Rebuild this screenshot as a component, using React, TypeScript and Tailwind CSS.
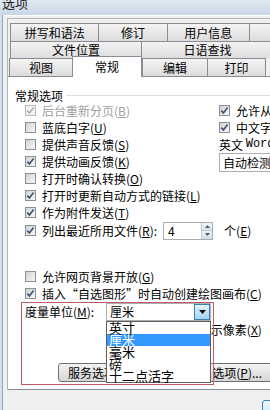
import React from 'react';

interface BoxProps {
  checked?: boolean;
  disabled?: boolean;
}

function Box({ checked, disabled }: BoxProps) {
  return (
    <span
      className={`flex h-[11px] w-[11px] shrink-0 items-center justify-center border ${
        disabled
          ? 'border-[#b9b9b9] bg-[#f2f2f2]'
          : 'border-[#8e8f8f] bg-linear-to-br from-[#cfd3d8] to-[#f8f8f8]'
      }`}
    >
      {checked && (
        <svg width="9" height="9" viewBox="0 0 9 9">
          <path
            d="M1.3 4.6 L3.4 6.9 L7.6 1.6"
            fill="none"
            stroke={disabled ? '#a9b1bc' : '#3f5170'}
            strokeWidth="1.6"
          />
        </svg>
      )}
    </span>
  );
}

interface CheckRowProps extends BoxProps {
  label: string;
  k: string;
  tail?: string;
}

function CheckRow({ label, k, tail = '', checked, disabled }: CheckRowProps) {
  return (
    <div className="flex h-[17px] items-center whitespace-nowrap">
      <Box checked={checked} disabled={disabled} />
      <span className={`ml-[6px] leading-[17px] ${disabled ? 'text-[#a0a0a0]' : ''}`}>
        {label}(<span className="underline">{k}</span>){tail}
      </span>
    </div>
  );
}

interface TabProps {
  label: string;
  w: string;
  last?: boolean;
}

function Tab({ label, w, last }: TabProps) {
  return (
    <div
      className={`flex h-full items-center justify-center border-l border-t border-[#898c95] bg-linear-to-b from-[#f4f4f4] to-[#dcdcdc] leading-[16px] ${w} ${
        last ? 'border-r' : ''
      }`}
    >
      {label}
    </div>
  );
}

const UNITS = ['英寸', '厘米', '毫米', '磅', '十二点活字'];

export default function App() {
  return (
    <div className="relative h-[410px] w-[270px] overflow-hidden bg-[#f0f0f0] font-['Noto_Sans_CJK_SC',sans-serif] text-[12px] text-black">
      {/* 标题栏 */}
      <div className="h-[15px] overflow-hidden bg-linear-to-b from-[#e1e9f2] to-[#c9d7e6] pl-[2px]">
        <div className="-mt-[6px] text-[13px] leading-[17px] text-[#1b1b1b]">选项</div>
      </div>

      <div className="flex h-[395px]">
        <div className="w-[3px] shrink-0 border-r border-[#93a6bd] bg-[#d3dfec]" />
        <div className="flex-1 border-t border-white pl-[4px] pt-[2px]">
          <div className="w-[320px] border-l border-t border-[#b4b4b4] pt-[4px]">
            {/* 选项卡 */}
            <div className="ml-[2px] flex h-[18px]">
              <Tab label="拼写和语法" w="w-[91px]" />
              <Tab label="修订" w="w-[70px]" />
              <Tab label="用户信息" w="w-[85px]" />
              <Tab label="兼容性" w="w-[80px]" last />
            </div>
            <div className="ml-[2px] flex h-[17px]">
              <Tab label="文件位置" w="w-[131px]" />
              <Tab label="日语查找" w="w-[133px]" last />
            </div>
            <div className="ml-[1px] flex h-[18px] items-start">
              <Tab label="视图" w="w-[63px]" />
              <div className="relative z-10 -mt-[2px] flex h-[21px] w-[70px] items-center justify-center border-x border-t border-[#898c95] bg-white pb-[1px] leading-[16px]">
                常规
              </div>
              <Tab label="编辑" w="w-[65px]" />
              <Tab label="打印" w="w-[59px]" last />
            </div>

            {/* 内容面板 */}
            <div className="h-[314px] border-y border-[#898c95] bg-white pl-[7px] pt-[12px]">
              <div className="flex h-[13px] items-center">
                <span className="leading-[13px]">常规选项</span>
                <span className="ml-[3px] h-px flex-1 bg-[#d9dde2]" />
              </div>

              <div className="pl-[10px]">
                <div className="flex">
                  <div className="w-[194px] shrink-0">
                    <CheckRow label="后台重新分页" k="B" checked disabled />
                    <CheckRow label="蓝底白字" k="U" />
                    <CheckRow label="提供声音反馈" k="S" />
                    <CheckRow label="提供动画反馈" k="K" checked />
                    <CheckRow label="打开时确认转换" k="O" />
                  </div>
                  <div className="whitespace-nowrap">
                    <CheckRow label="允许从左向右排版" k="A" checked />
                    <CheckRow label="中文字体也应用于西文" k="F" checked />
                    <div className="flex h-[17px] items-center leading-[17px]">
                      英文&nbsp;<span className="font-['Liberation_Mono',monospace]">Word 6.0/95</span>&nbsp;文档(<span className="underline">N</span>):
                    </div>
                    <div className="flex h-[19px] w-[200px] items-center border border-[#abadb3] bg-white pl-[3px] leading-[17px]">
                      自动检测是否包含亚洲语言文字
                    </div>
                  </div>
                </div>

                <CheckRow label="打开时更新自动方式的链接" k="L" checked />
                <CheckRow label="作为附件发送" k="T" checked />

                <div className="flex h-[19px] items-center whitespace-nowrap">
                  <Box checked />
                  <span className="ml-[6px] leading-[17px]">
                    列出最近所用文件(<span className="underline">R</span>):
                  </span>
                  <div className="ml-[6px] flex h-[18px] w-[50px] border border-[#abadb3] bg-white">
                    <span className="flex-1 pl-[4px] leading-[16px]">4</span>
                    <div className="flex w-[11px] flex-col border-l border-[#c3c8d0]">
                      <span className="flex flex-1 items-center justify-center border-b border-[#c3c8d0] bg-linear-to-b from-[#f4f7fb] to-[#d9e2ec]">
                        <svg width="5" height="3" viewBox="0 0 5 3">
                          <path d="M0 3 L2.5 0 L5 3 Z" fill="#4b5a6e" />
                        </svg>
                      </span>
                      <span className="flex flex-1 items-center justify-center bg-linear-to-b from-[#eef2f7] to-[#d3dce7]">
                        <svg width="5" height="3" viewBox="0 0 5 3">
                          <path d="M0 0 L2.5 3 L5 0 Z" fill="#4b5a6e" />
                        </svg>
                      </span>
                    </div>
                  </div>
                  <span className="ml-[11px] leading-[17px]">
                    个(<span className="underline">E</span>)
                  </span>
                </div>

                <div className="mt-[28px]">
                  <CheckRow label="允许网页背景开放" k="G" />
                  <CheckRow label="插入“自选图形”时自动创建绘图画布" k="C" checked />
                </div>

                {/* 度量单位 */}
                <div className="flex h-[19px] items-center whitespace-nowrap">
                  <span className="w-[81px] shrink-0 leading-[17px]">
                    度量单位(<span className="underline">M</span>):
                  </span>
                  <div className="relative flex h-[18px] w-[105px] items-center border border-[#abadb3] bg-white pl-[3px]">
                    <span className="flex-1 leading-[16px]">厘米</span>
                    <span className="flex h-[16px] w-[16px] items-center justify-center border border-[#3c7fb1] bg-linear-to-b from-[#e6f4fc] to-[#9fd2f3]">
                      <svg width="7" height="4" viewBox="0 0 7 4">
                        <path d="M0 0 L7 0 L3.5 4 Z" fill="#111" />
                      </svg>
                    </span>
                    <div className="absolute left-[-1px] top-[17px] z-20 h-[62px] w-[105px] border border-[#5e5e5e] bg-white">
                      {UNITS.map((u) => (
                        <div
                          key={u}
                          className={`h-[12px] pl-[2px] text-[13px] leading-[12px] ${
                            u === '厘米' ? 'bg-[#3399ff] text-white' : ''
                          }`}
                        >
                          {u}
                        </div>
                      ))}
                    </div>
                  </div>
                </div>

                <div className="flex h-[17px] items-center whitespace-nowrap pl-[98px]">
                  <Box />
                  <span className="ml-[6px] leading-[17px]">
                    HTML 功能显示像素(<span className="underline">X</span>)
                  </span>
                </div>

                <div className="mt-[25px] flex h-[19px] whitespace-nowrap">
                  <div className="ml-[33px] flex w-[93px] items-center justify-center rounded-[3px] border border-[#707070] bg-linear-to-b from-[#f3f3f3] to-[#d6d6d6] leading-[17px]">
                    服务选项(<span className="underline">V</span>)...
                  </div>
                  <div className="ml-[4px] flex w-[130px] items-center rounded-[3px] border border-[#707070] bg-linear-to-b from-[#f3f3f3] to-[#d6d6d6] pl-[29px] leading-[17px]">
                    Web 选项(<span className="underline">P</span>)...
                  </div>
                </div>
              </div>
            </div>
          </div>

          <div className="ml-[255px] mt-[10px] h-[23px] w-[75px] rounded-[3px] border border-[#3c7fb1] bg-linear-to-b from-[#eaf6fd] to-[#bee6fd]" />
        </div>
      </div>

      {/* 红色标注框 */}
      <div className="pointer-events-none absolute left-[21px] top-[302px] z-30 h-[83px] w-[193px] border border-[#c05a64]" />
    </div>
  );
}
